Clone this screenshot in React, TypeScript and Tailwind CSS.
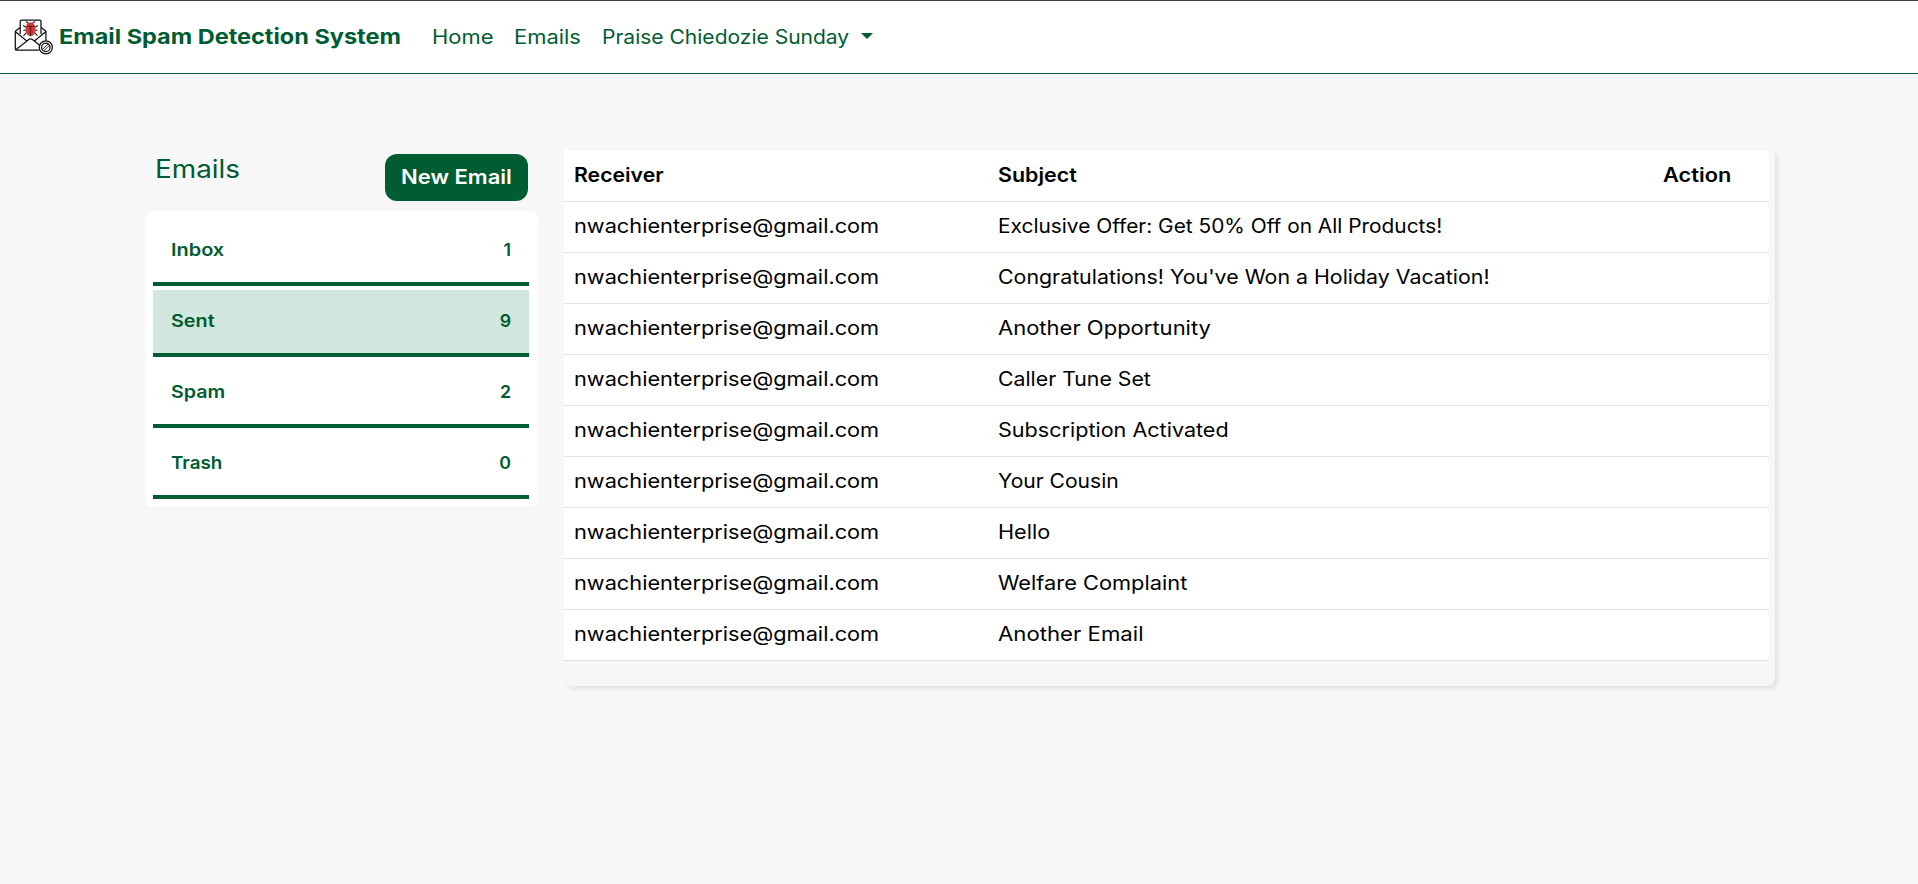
type Folder = { name: string; count: number; active?: boolean; stretch: string };
type Email = { subject: string; stretch: string };

const folders: Folder[] = [
  { name: "Inbox", count: 1, stretch: "scale-x-[1.12]" },
  { name: "Sent", count: 9, active: true, stretch: "scale-x-[1.113]" },
  { name: "Spam", count: 2, stretch: "scale-x-[1.104]" },
  { name: "Trash", count: 0, stretch: "scale-x-[1.06]" },
];

const emails: Email[] = [
  { subject: "Exclusive Offer: Get 50% Off on All Products!", stretch: "scale-x-[1.07]" },
  { subject: "Congratulations! You've Won a Holiday Vacation!", stretch: "scale-x-[1.095]" },
  { subject: "Another Opportunity", stretch: "scale-x-[1.128]" },
  { subject: "Caller Tune Set", stretch: "scale-x-[1.09]" },
  { subject: "Subscription Activated", stretch: "scale-x-[1.106]" },
  { subject: "Your Cousin", stretch: "scale-x-[1.08]" },
  { subject: "Hello", stretch: "scale-x-[1.11]" },
  { subject: "Welfare Complaint", stretch: "scale-x-[1.118]" },
  { subject: "Another Email", stretch: "scale-x-[1.137]" },
];

function Wide({ by, children }: { by: string; children: string | number }) {
  return <span className={`inline-block origin-left whitespace-nowrap ${by}`}>{children}</span>;
}

function Logo() {
  return (
    <svg className="h-10 w-10 shrink-0" viewBox="0 0 40 40" fill="none" stroke="#111" strokeWidth="1.25" strokeLinejoin="round" strokeLinecap="round">
      <path d="M6.2 16.4V4.2Q6.2 3 7.4 3H25.8Q27 3 27 4.2V16.4" />
      <path d="M5.7 10.8L1.9 13.8Q1.3 14.3 1.3 15V32Q1.3 33 2.5 33H25M27.5 10.8L31.3 13.8Q31.9 14.3 31.9 15V23" />
      <path d="M1.5 14.7L12.2 23.4M31.7 14.7L21 23.4M1.8 32.7L14.8 22.5Q16.6 21.1 18.4 22.5L26.5 28.7" />
      <path d="M14.5 7.2Q14.4 5.3 12.2 4.8M18.5 7.2Q18.6 5.3 20.8 4.8M12.5 10.6L9.6 8.7M20.5 10.6L23.4 8.7M12 13.3H10M21 13.3H23M12.5 15.7L9.8 18.3M20.5 15.7L23.2 18.3" strokeWidth="1.1" />
      <ellipse cx="16.5" cy="12.2" rx="4.9" ry="7" fill="#d93a31" stroke="none" />
      <path d="M13 9.3H20M16.5 9.3V18.4" stroke="#56201e" strokeWidth="1.3" />
      <circle cx="31.8" cy="30.4" r="6.5" fill="#fff" />
      <circle cx="31.8" cy="30.4" r="4.2" />
      <path d="M28.5 32.4L33.8 27.1M29.9 33.8L35.1 28.5" strokeWidth="0.9" />
    </svg>
  );
}

function Navbar() {
  return (
    <nav className="flex h-[74px] items-center border-t border-b border-t-[#41414a] border-b-[#005c32] bg-white pl-3.5 text-[19.5px] text-[#005c32]">
      <Logo />
      <span className="ml-[5px] w-[373px] text-[20.5px] font-bold"><Wide by="scale-x-[1.146]">Email Spam Detection System</Wide></span>
      <span className="w-[82px] pt-0.5"><Wide by="scale-x-[1.124]">Home</Wide></span>
      <span className="w-[88px] pt-0.5"><Wide by="scale-x-[1.125]">Emails</Wide></span>
      <span className="w-[258.5px] pt-0.5"><Wide by="scale-x-[1.078]">Praise Chiedozie Sunday</Wide></span>
      <span className="mb-0.5 border-x-6 border-t-6 border-x-transparent border-t-[#005c32]" />
    </nav>
  );
}

function Sidebar() {
  return (
    <aside className="w-[393px] text-[#005c32]">
      <div className="flex h-[61px] items-start justify-between pt-1 pr-2.5 pl-2.5">
        <h1 className="text-[25px] leading-[31px]"><Wide by="scale-x-[1.115]">Emails</Wide></h1>
        <button className="h-[47px] w-[143px] rounded-xl bg-[#005c32] pt-px pl-4 text-left text-[19.5px] font-semibold text-white"><Wide by="scale-x-[1.13]">New Email</Wide></button>
      </div>
      <div className="flex flex-col gap-1 rounded-lg bg-white py-2 pr-[9px] pl-2">
        {folders.map((f) => (
          <div
            key={f.name}
            className={`flex h-[67px] items-center justify-between border-b-4 border-[#005c32] pr-[18px] pl-[18px] text-[17.8px] font-semibold ${f.active ? "bg-[#d1e7dd]" : ""}`}
          >
            <Wide by={f.stretch}>{f.name}</Wide>
            <span>{f.count}</span>
          </div>
        ))}
      </div>
    </aside>
  );
}

function EmailTable() {
  return (
    <section className="h-[536px] w-[1211px] rounded-lg pr-1.5 shadow-[3px_3px_5px_rgba(0,0,0,0.09)]">
      <table className="w-full table-fixed border-collapse bg-white text-left text-[19.5px] text-black">
        <colgroup>
          <col className="w-[424px]" />
          <col className="w-[665px]" />
          <col />
        </colgroup>
        <thead>
          <tr className="h-[51px] border-b border-[#dee2e6]">
            <th className="px-2.5 py-0 font-semibold"><Wide by="scale-x-[1.089]">Receiver</Wide></th>
            <th className="px-2.5 py-0 font-semibold"><Wide by="scale-x-[1.099]">Subject</Wide></th>
            <th className="px-2.5 py-0 font-semibold"><Wide by="scale-x-[1.118]">Action</Wide></th>
          </tr>
        </thead>
        <tbody>
          {emails.map((e) => (
            <tr key={e.subject} className="h-[51px] border-b border-[#dee2e6]">
              <td className="px-2.5 pt-px pb-0"><Wide by="scale-x-[1.115]">nwachienterprise@gmail.com</Wide></td>
              <td className="px-2.5 pt-px pb-0"><Wide by={e.stretch}>{e.subject}</Wide></td>
              <td />
            </tr>
          ))}
        </tbody>
      </table>
    </section>
  );
}

export default function App() {
  return (
    <div className="min-h-screen bg-[#f7f7f7] font-['Inter',sans-serif]">
      <Navbar />
      <main className="flex items-start gap-[26px] pt-[76px] pl-[145px]">
        <Sidebar />
        <EmailTable />
      </main>
    </div>
  );
}
